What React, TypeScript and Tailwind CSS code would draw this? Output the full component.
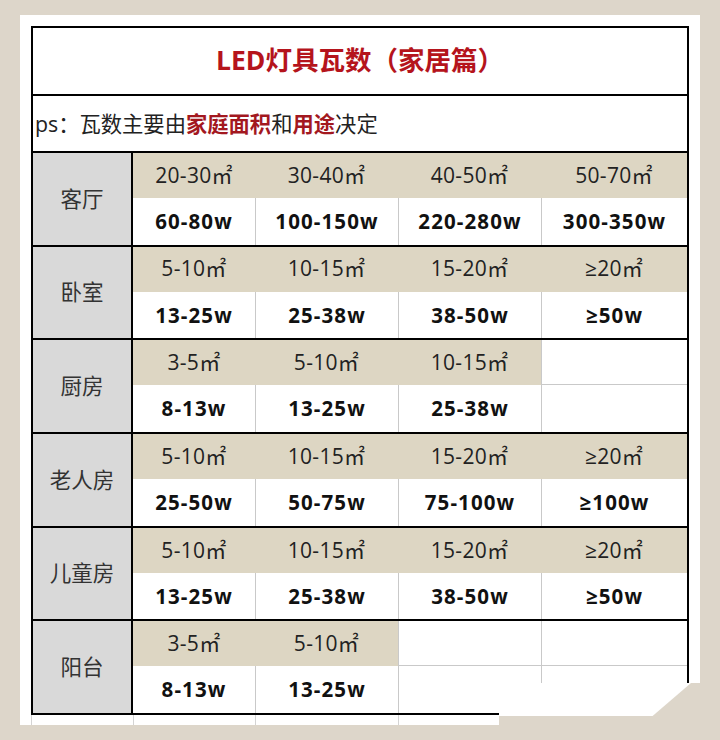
import React from "react";

type Cell = [string, string] | null;
type Room = { name: string; cells: Cell[] };

const rooms: Room[] = [
  { name: "客厅", cells: [["20-30㎡", "60-80w"], ["30-40㎡", "100-150w"], ["40-50㎡", "220-280w"], ["50-70㎡", "300-350w"]] },
  { name: "卧室", cells: [["5-10㎡", "13-25w"], ["10-15㎡", "25-38w"], ["15-20㎡", "38-50w"], ["≥20㎡", "≥50w"]] },
  { name: "厨房", cells: [["3-5㎡", "8-13w"], ["5-10㎡", "13-25w"], ["10-15㎡", "25-38w"], null] },
  { name: "老人房", cells: [["5-10㎡", "25-50w"], ["10-15㎡", "50-75w"], ["15-20㎡", "75-100w"], ["≥20㎡", "≥100w"]] },
  { name: "儿童房", cells: [["5-10㎡", "13-25w"], ["10-15㎡", "25-38w"], ["15-20㎡", "38-50w"], ["≥20㎡", "≥50w"]] },
  { name: "阳台", cells: [["3-5㎡", "8-13w"], ["5-10㎡", "13-25w"], null, null] },
];

function Block({ room }: { room: Room }) {
  return (
    <div className="flex h-[93.7px] border-t-2 border-black">
      <div className="flex w-[100px] shrink-0 items-center justify-center border-r-2 border-black bg-[#d9d9d9] text-[21.5px] text-[#333]">
        {room.name}
      </div>
      <div className="grid flex-1 grid-cols-[122px_143px_143px_1fr] grid-rows-[45px_1fr]">
        {room.cells.map((c, i) =>
          c ? (
            <div key={"a" + i} className="flex items-center justify-center bg-[#ddd6c3] text-[21px] tracking-[0.3px] text-[#222]">
              {c[0]}
            </div>
          ) : (
            <div key={"a" + i} className="border-b border-l border-[#c9c9c9] bg-white" />
          )
        )}
        {room.cells.map((c, i) =>
          i === 0 ? (
            <div key={"v" + i} className="flex items-center justify-center bg-white text-[20.5px] font-bold tracking-[1.1px] text-[#111]">
              {c ? c[1] : ""}
            </div>
          ) : (
            <div key={"v" + i} className="flex items-center justify-center border-l border-[#c9c9c9] bg-white text-[20.5px] font-bold tracking-[1.1px] text-[#111]">
              {c ? c[1] : ""}
            </div>
          )
        )}
      </div>
    </div>
  );
}

export default function App() {
  return (
    <div className="relative h-[740px] w-[720px] overflow-hidden bg-[#ddd6ca] pl-[20px] pt-[15px] font-['Open_Sans','Noto_Sans_CJK_SC',sans-serif]">
      <div className="w-[680px] bg-white px-[11px] pt-[11px]">
        <div className="border-2 border-black">
          <div className="flex h-[66px] items-center justify-center text-[26.5px] font-bold text-[#b5141c]">
            LED灯具瓦数（家居篇）
          </div>
          <div className="flex h-[57px] items-center border-t-2 border-black pl-[2px] text-[21.3px] text-[#222]">
            <span>ps：瓦数主要由</span>
            <span className="font-bold text-[#a3181f]">家庭面积</span>
            <span>和</span>
            <span className="font-bold text-[#a3181f]">用途</span>
            <span>决定</span>
          </div>
          {rooms.map((r) => (
            <Block key={r.name} room={r} />
          ))}
        </div>
        <div className="flex h-[10px]">
          <div className="w-[102px] border-l border-[#d4d4d4]" />
          <div className="w-[122px] border-l border-[#d4d4d4]" />
          <div className="w-[143px] border-l border-[#d4d4d4]" />
          <div className="w-[143px] border-l border-[#d4d4d4]" />
          <div className="w-[148px] border-l border-[#d4d4d4]" />
        </div>
      </div>
      <div className="absolute left-[499px] top-[683px] h-[57px] w-[221px] bg-[#ddd6ca]" />
      <div className="absolute left-[499px] top-[683px] h-[33px] w-[192px] bg-white blur-[0.6px] [clip-path:polygon(0_0,100%_0,80%_100%,0_100%)]" />
    </div>
  );
}
